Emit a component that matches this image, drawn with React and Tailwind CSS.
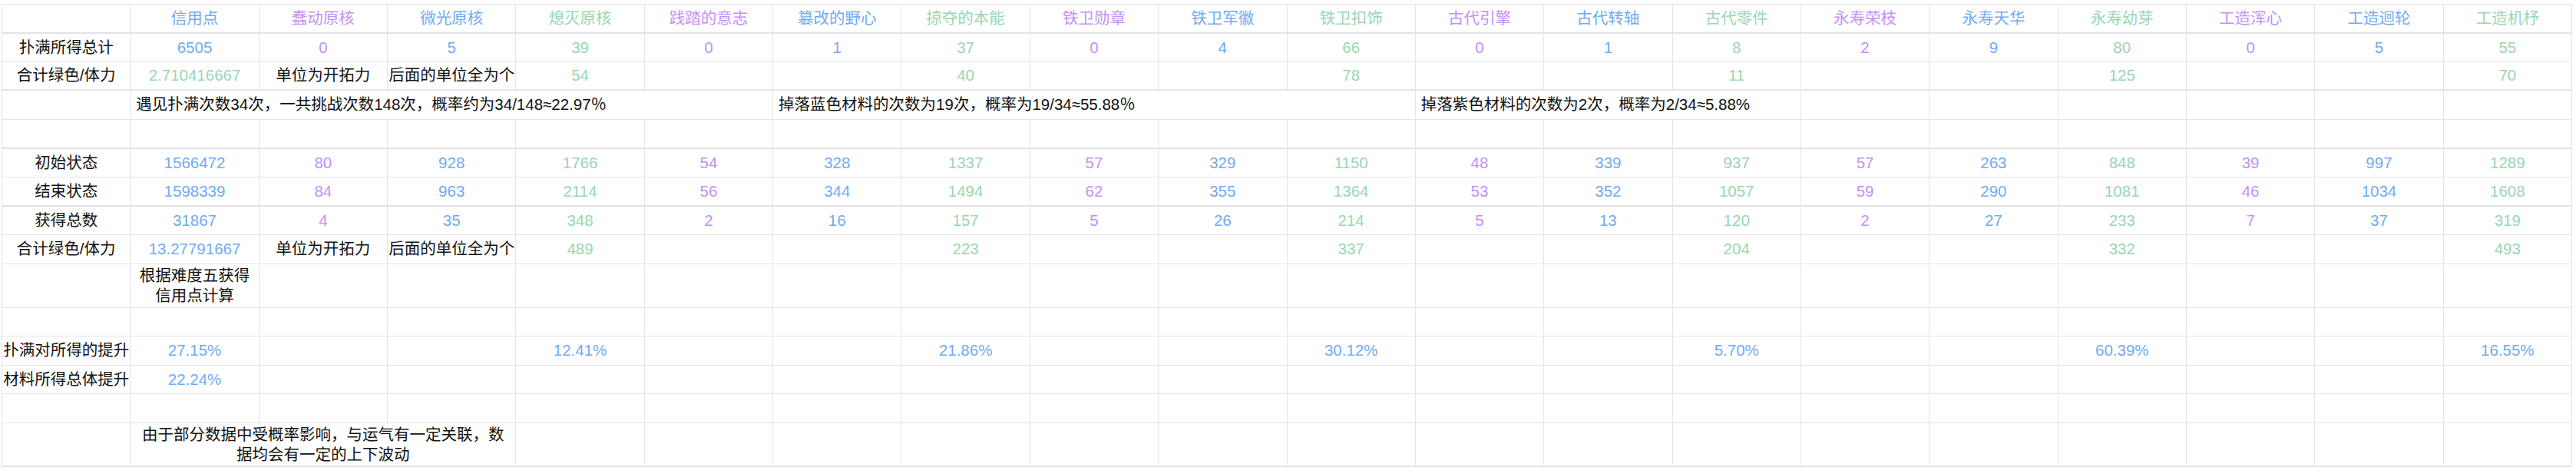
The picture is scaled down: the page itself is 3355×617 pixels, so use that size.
const names = [
  '信用点', '蠢动原核', '微光原核', '熄灭原核', '践踏的意志', '篡改的野心', '掠夺的本能',
  '铁卫勋章', '铁卫军徽', '铁卫扣饰', '古代引擎', '古代转轴', '古代零件',
  '永寿荣枝', '永寿天华', '永寿幼芽', '工造浑心', '工造迴轮', '工造机杼',
];

const BLUE = 'text-[#71abf4]';
const PURPLE = 'text-[#c391f6]';
const GREEN = 'text-[#98d7b1]';
const DARK = 'text-[#111111]';

// 第 i 列（从 1 开始，0 为标题列）的颜色
const colColor = (i) => {
  if (i === 1) return BLUE;
  const k = (i - 2) % 3;
  return k === 0 ? PURPLE : k === 1 ? BLUE : GREEN;
};

const fullRow = [6505, 0, 5, 39, 0, 1, 37, 0, 4, 66, 0, 1, 8, 2, 9, 80, 0, 5, 55];
const startRow = [1566472, 80, 928, 1766, 54, 328, 1337, 57, 329, 1150, 48, 339, 937, 57, 263, 848, 39, 997, 1289];
const endRow = [1598339, 84, 963, 2114, 56, 344, 1494, 62, 355, 1364, 53, 352, 1057, 59, 290, 1081, 46, 1034, 1608];
const gainRow = [31867, 4, 35, 348, 2, 16, 157, 5, 26, 214, 5, 13, 120, 2, 27, 233, 7, 37, 319];

const greenTotals1 = { 4: 54, 7: 40, 10: 78, 13: 11, 16: 125, 19: 70 };
const greenTotals2 = { 4: 489, 7: 223, 10: 337, 13: 204, 16: 332, 19: 493 };
const boosts = { 1: '27.15%', 4: '12.41%', 7: '21.86%', 10: '30.12%', 13: '5.70%', 16: '60.39%', 19: '16.55%' };

function Cell({ children, color = DARK, span = 1, align = 'center', wrap = false }) {
  const spanCls = span === 5 ? 'col-span-5' : span === 3 ? 'col-span-3' : 'col-span-1';
  const alignCls = align === 'left' ? 'justify-start pl-[7px]' : 'justify-center';
  return (
    <div
      className={`${spanCls} ${alignCls} ${color} flex items-center border-r border-b border-[#e4e4e9] min-w-0 ${
        wrap ? 'px-2 text-center leading-[26px]' : 'whitespace-nowrap leading-none'
      }`}
    >
      {children}
    </div>
  );
}

function Row({ height, children, thick = false }) {
  return (
    <div
      className={`grid grid-cols-[repeat(20,minmax(0,1fr))] ${height} ${thick ? '[&>div]:border-b-2 [&>div]:border-b-[#e2e2e7]' : ''}`}
    >
      {children}
    </div>
  );
}

const blanks = (from, to) => {
  const out = [];
  for (let i = from; i <= to; i++) out.push(<Cell key={i} />);
  return out;
};

export default function App() {
  const cols = Array.from({ length: 19 }, (_, i) => i + 1);

  return (
    <div className="min-h-screen bg-white pt-[5px] pl-[2px] font-['Liberation_Sans','Noto_Sans_CJK_SC',sans-serif] text-[20.5px]">
      <div className="w-[3348px] border-l border-t border-[#e4e4e9]">
        <Row height="h-[38px]" thick>
          <Cell />
          {names.map((n, i) => (
            <Cell key={n} color={colColor(i + 1)}>{n}</Cell>
          ))}
        </Row>

        <Row height="h-[37px]">
          <Cell>扑满所得总计</Cell>
          {fullRow.map((v, i) => (
            <Cell key={i} color={colColor(i + 1)}>{v}</Cell>
          ))}
        </Row>

        <Row height="h-[37px]" thick>
          <Cell>合计绿色/体力</Cell>
          <Cell color={GREEN}>2.710416667</Cell>
          <Cell>单位为开拓力</Cell>
          <Cell>后面的单位全为个</Cell>
          {cols.slice(3).map((c) => (
            <Cell key={c} color={GREEN}>{greenTotals1[c] ?? ''}</Cell>
          ))}
        </Row>

        <Row height="h-[38px]">
          <Cell />
          <Cell span={5} align="left">遇见扑满次数34次，一共挑战次数148次，概率约为34/148≈22.97％</Cell>
          <Cell span={5} align="left">掉落蓝色材料的次数为19次，概率为19/34≈55.88％</Cell>
          <Cell span={3} align="left">掉落紫色材料的次数为2次，概率为2/34≈5.88%</Cell>
          {blanks(15, 20)}
        </Row>

        <Row height="h-[38px]" thick>{blanks(1, 20)}</Row>

        <Row height="h-[37px]">
          <Cell>初始状态</Cell>
          {startRow.map((v, i) => (
            <Cell key={i} color={colColor(i + 1)}>{v}</Cell>
          ))}
        </Row>

        <Row height="h-[38px]" thick>
          <Cell>结束状态</Cell>
          {endRow.map((v, i) => (
            <Cell key={i} color={colColor(i + 1)}>{v}</Cell>
          ))}
        </Row>

        <Row height="h-[37px]">
          <Cell>获得总数</Cell>
          {gainRow.map((v, i) => (
            <Cell key={i} color={colColor(i + 1)}>{v}</Cell>
          ))}
        </Row>

        <Row height="h-[38px]">
          <Cell>合计绿色/体力</Cell>
          <Cell color={BLUE}>13.27791667</Cell>
          <Cell>单位为开拓力</Cell>
          <Cell>后面的单位全为个</Cell>
          {cols.slice(3).map((c) => (
            <Cell key={c} color={GREEN}>{greenTotals2[c] ?? ''}</Cell>
          ))}
        </Row>

        <Row height="h-[57px]">
          <Cell />
          <Cell wrap>根据难度五获得信用点计算</Cell>
          {blanks(3, 20)}
        </Row>

        <Row height="h-[37px]">{blanks(1, 20)}</Row>

        <Row height="h-[38px]">
          <Cell>扑满对所得的提升</Cell>
          {cols.map((c) => (
            <Cell key={c} color={BLUE}>{boosts[c] ?? ''}</Cell>
          ))}
        </Row>

        <Row height="h-[37px]">
          <Cell>材料所得总体提升</Cell>
          <Cell color={BLUE}>22.24%</Cell>
          {blanks(3, 20)}
        </Row>

        <Row height="h-[38px]">{blanks(1, 20)}</Row>

        <Row height="h-[57px]" thick>
          <Cell />
          <Cell span={3} wrap>由于部分数据中受概率影响，与运气有一定关联，数据均会有一定的上下波动</Cell>
          {blanks(5, 20)}
        </Row>
      </div>
    </div>
  );
}
